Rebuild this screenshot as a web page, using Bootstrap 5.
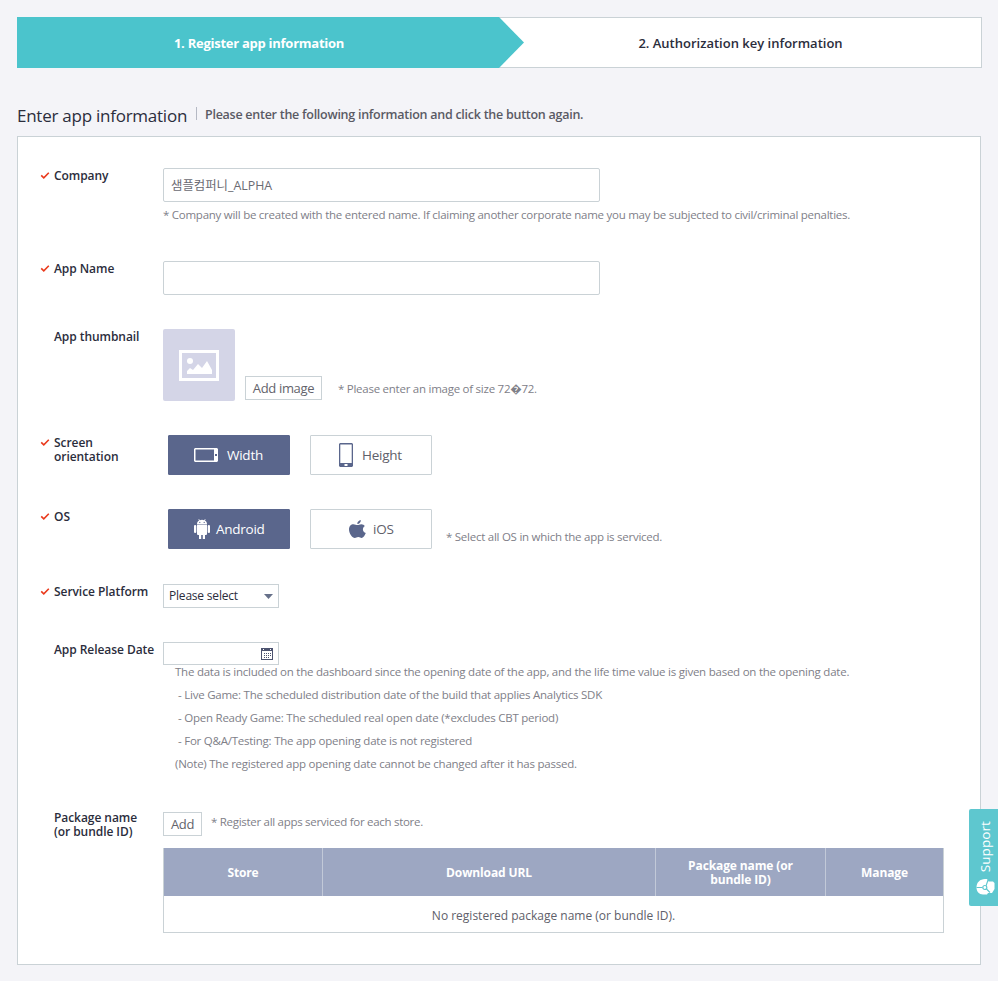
<!DOCTYPE html>
<html lang="en">
<head>
<meta charset="utf-8">
<meta name="viewport" content="width=device-width, initial-scale=1">
<title>Register app information</title>
<link href="https://cdn.jsdelivr.net/npm/bootstrap@5.3.0/dist/css/bootstrap.min.css" rel="stylesheet">
<style>
  :root { --teal:#4bc4cc; --slate:#5a668c; --line:#cad2d6; --ink:#2b2d3c; --note:#808088; }
  body { font-family:"Open Sans","Noto Sans CJK KR",sans-serif; font-size:12px; line-height:14px; color:var(--ink); background:#f4f4f8; padding:17px 16px 16px 17px; height:981px; overflow:hidden; }
  .steps { height:51px; font-size:13px; }
  .step-now { width:507px; padding-right:23px; background:var(--teal); clip-path:polygon(0 0,482px 0,507px 50%,482px 100%,0 100%); letter-spacing:-.26px; z-index:1; }
  .step-next { margin-left:-25px; border:1px solid var(--line); }
  .heading { height:68px; padding-top:38px; }
  .heading h1 { font-size:17px; line-height:20px; letter-spacing:-.25px; font-weight:500; width:179px; }
  .heading p { font-size:12.5px; line-height:16px; letter-spacing:-.26px; color:#5a5a64; border-left:1px solid #b5b9c4; padding-left:8px; height:13px; margin-top:1px; }
  .panel { width:964px; height:829px; border:1px solid var(--line); padding:31px 36px 0 22px; }
  .field-name { width:123px; padding:1px 0 0 14px; font-weight:600; letter-spacing:-.06px; }
  .field-name.required { padding-left:0; }
  .field-name.package { margin-top:-2px; }
  .tick { width:10px; height:9px; margin:2px 4px 0 0; flex:none; }
  .text-box { width:437px; height:34px; border-color:var(--line); border-radius:2px; padding:0 7px; font-size:12.4px; color:#6a6a72; }
  .note { font-size:11.5px; letter-spacing:-.255px; color:var(--note); white-space:nowrap; }
  .note-company { margin-top:6px; }
  .note-thumb { margin-top:53px; }
  .note-os { margin:21px 0 0 14px; }
  .note-add { margin-top:3px; letter-spacing:-.29px; }
  .small-btn { height:24px; border:1px solid var(--line); border-radius:0; padding:0; font-size:13px; line-height:22px; letter-spacing:-.35px; color:#63636b; background:#fff; }
  .add-image { width:77px; margin:47px 16px 0 10px; }
  .add-package { width:39px; margin-right:9px; }
  .thumb { width:72px; height:72px; background:#d4d5e7; border-radius:2px; }
  .choice { width:122px; height:40px; border:1px solid var(--line); border-radius:1px; padding:0; font-size:13.5px; line-height:20px; letter-spacing:-.25px; color:#60606a; background:#fff; display:flex; align-items:center; gap:9px; }
  .choice.picked { margin:0 20px 0 5px; padding-left:25px; background:var(--slate); border-color:var(--slate); color:#fff; }
  .choice.android { gap:6px; }
  .choice.tall { padding-left:28px; }
  .choice.ios { padding-left:38px; gap:7px; }
  .picker { width:116px; height:24px; border:1px solid var(--line); border-radius:0; padding:0 5px; letter-spacing:-.2px; }
  .picker.date { height:23px; }
  .r-company { height:93px } .r-name { height:68px } .r-thumb { height:106px } .r-screen { height:74px }
  .r-os { height:75px } .r-platform { height:58px } .r-date { height:170px }
  .explain { margin:-5px 0 0 12px; line-height:23px; letter-spacing:-.235px; }
  .explain .sub { padding-left:3px; }
  .pkg { width:781px; margin-top:12px; border:1px solid var(--line); border-top:0; border-collapse:separate; border-spacing:0; table-layout:fixed; }
  .pkg th { height:48px; padding:2px 28px 0; background:#9da7c2; color:#fff; font-size:12px; font-weight:700; text-align:center; letter-spacing:-.12px; }
  .pkg th + th { border-left:1px solid #c2c9d8; }
  .pkg td { height:36px; padding:4px 0 0; text-align:center; color:#60606a; }
  .support { position:fixed; right:0; top:809px; width:29px; height:97px; background:#5ec7cf; border-radius:2px 0 0 2px; color:#fff; }
  .support span { writing-mode:vertical-rl; transform:rotate(180deg); font-size:13.5px; font-weight:500; line-height:20px; letter-spacing:.1px; margin:12px 0 6px 2px; }
  .support svg { margin-left:4px; }
</style>
</head>
<body>
<svg class="d-none"><symbol id="tick" viewBox="0 0 10 9"><path d="M1.200 4.300 3.800 6.800 8.800 1.800" fill="none" stroke="#ea3a1c" stroke-width="1.600"/></symbol></svg>

<nav class="steps d-flex">
  <div class="step-now d-flex align-items-center justify-content-center text-white fw-bold position-relative">1. Register app information</div>
  <div class="step-next flex-grow-1 d-flex align-items-center justify-content-center bg-white fw-semibold">2. Authorization key information</div>
</nav>

<header class="heading d-flex">
  <h1 class="mb-0">Enter app information</h1>
  <p class="mb-0 fw-semibold">Please enter the following information and click the button again.</p>
</header>

<main class="panel bg-white">
  <div class="r-company d-flex">
    <div class="field-name required d-flex"><svg class="tick"><use href="#tick"/></svg>Company</div>
    <div><input class="form-control text-box shadow-none" value="샘플컴퍼니_ALPHA">
      <div class="note note-company">* Company will be created with the entered name. If claiming another corporate name you may be subjected to civil/criminal penalties.</div></div>
  </div>
  <div class="r-name d-flex">
    <div class="field-name required d-flex"><svg class="tick"><use href="#tick"/></svg>App Name</div>
    <div><input class="form-control text-box shadow-none"></div>
  </div>
  <div class="r-thumb d-flex">
    <div class="field-name">App thumbnail</div>
    <div class="thumb d-flex align-items-center justify-content-center">
      <svg width="42" height="32" viewBox="0 0 42 32"><path d="M2.500 2.500h37v28h-37z" fill="none" stroke="#fff" stroke-width="3"/><circle cx="12" cy="12" r="3" fill="#fff"/><path d="M9 25v-3l3-3 3 2 5-6 4 4 5-7 5 9v4z" fill="#fff"/></svg>
    </div>
    <button class="btn small-btn add-image">Add image</button>
    <div class="note note-thumb">* Please enter an image of size 72&#xFFFD;72.</div>
  </div>
  <div class="r-screen d-flex">
    <div class="field-name required d-flex"><svg class="tick"><use href="#tick"/></svg><span>Screen<br>orientation</span></div>
    <button class="btn choice picked">
      <svg width="24" height="14" viewBox="0 0 24 14"><path fill="#fff" fill-rule="evenodd" d="M1 0h22l1 1v12l-1 1H1l-1-1V1zM1.500 1.500v11h18.500v-11zM21 6v2h2V6z"/></svg>Width</button>
    <button class="btn choice tall">
      <svg width="14" height="24" viewBox="0 0 14 24"><path fill="#5a668c" fill-rule="evenodd" d="M1 0h12l1 1v22l-1 1H1l-1-1V1zM1.300 1.500V20h11.400V1.500zM5.500 21v2h3v-2z"/></svg>Height</button>
  </div>
  <div class="r-os d-flex">
    <div class="field-name required d-flex"><svg class="tick"><use href="#tick"/></svg>OS</div>
    <button class="btn choice picked android">
      <svg width="16" height="20" viewBox="0 0 16 20" fill="#fff"><path d="M3 5C3 3.300 4 2 5.100 1.500L4.400.3 5 0l.8 1.200a6 6 0 0 1 4.400 0L11 0l.6.3-.7 1.200C12 2 13 3.300 13 5z"/><path d="M3 5.600h10V15q0 1-1 1h-1v4H8.800v-4H7.200v4H5v-4H4q-1 0-1-1z"/><rect y="6" width="2.300" height="8" rx="1.100"/><rect x="13.700" y="6" width="2.300" height="8" rx="1.100"/><circle cx="5.800" cy="3.400" r=".6" fill="#5a668c"/><circle cx="10.200" cy="3.400" r=".6" fill="#5a668c"/></svg>Android</button>
    <button class="btn choice ios">
      <svg width="17" height="18" viewBox="0 0 17 18" fill="#5a668c"><path d="M11.800 0c.2 1.900-1.300 4-3.500 4C8.100 2.100 9.800.3 11.800 0zM8.700 5.100c.8 0 1.800-.9 3.600-.9 1.500 0 2.900.8 3.600 1.900-3 1.700-2.500 5.800.9 7-.8 2-2.300 4.800-4 4.800-1.400 0-1.800-.8-3.500-.8s-2.200.8-3.500.8C3.400 17.900 0 13.500 0 9.400c0-3.300 2.200-5.100 4.300-5.100 1.800 0 2.900.8 4.400.8z"/></svg>iOS</button>
    <div class="note note-os">* Select all OS in which the app is serviced.</div>
  </div>
  <div class="r-platform d-flex">
    <div class="field-name required d-flex"><svg class="tick"><use href="#tick"/></svg>Service Platform</div>
    <div class="picker d-flex align-items-center justify-content-between"><span>Please select</span><svg width="9" height="5"><path d="M0 0h9L4.500 5z" fill="#667089"/></svg></div>
  </div>
  <div class="r-date d-flex">
    <div class="field-name text-nowrap">App Release Date</div>
    <div>
      <div class="picker date d-flex align-items-center justify-content-end">
        <svg width="12" height="12" viewBox="0 0 12 12" shape-rendering="crispEdges"><path fill="#4c5370" fill-rule="evenodd" d="M0 0h12v12H0zM1 3v8h10V3zM2 1v1h1V1zM9 1v1h1V1z"/><path fill="#4c5370" d="M3 5h1v1H3zM5 5h1v1H5zM7 5h1v1H7zM3 7h1v1H3zM5 7h1v1H5zM7 7h1v1H7zM3 9h1v1H3zM5 9h1v1H5zM7 9h1v1H7zM9 5h1v1H9zM9 7h1v1H9z"/></svg>
      </div>
      <div class="note explain">
        <div>The data is included on the dashboard since the opening date of the app, and the life time value is given based on the opening date.</div>
        <div class="sub">- Live Game: The scheduled distribution date of the build that applies Analytics SDK</div>
        <div class="sub">- Open Ready Game: The scheduled real open date (*excludes CBT period)</div>
        <div class="sub">- For Q&amp;A/Testing: The app opening date is not registered</div>
        <div>(Note) The registered app opening date cannot be changed after it has passed.</div>
      </div>
    </div>
  </div>
  <div class="d-flex">
    <div class="field-name package">Package name<br>(or bundle ID)</div>
    <div>
      <div class="d-flex">
        <button class="btn small-btn add-package">Add</button>
        <div class="note note-add">* Register all apps serviced for each store.</div>
      </div>
      <table class="pkg">
        <colgroup><col style="width:158px"><col style="width:333px"><col style="width:170px"><col></colgroup>
        <thead><tr><th>Store</th><th>Download URL</th><th>Package name (or bundle ID)</th><th>Manage</th></tr></thead>
        <tbody><tr><td colspan="4">No registered package name (or bundle ID).</td></tr></tbody>
      </table>
    </div>
  </div>
</main>

<aside class="support d-flex flex-column align-items-center">
  <span>Support</span>
  <svg width="19" height="18" viewBox="0 0 19 18"><path fill="#fff" d="M9 1C4 1 .5 4.500.5 9.500c0 4 2.500 7 6.500 7h4l1-1.500h4l2.500-4V5L17 3.500h-4.500L11 1z"/><path d="M.5 9.500h6M10 8l2-6M10.500 11l3.500 3.500" fill="none" stroke="#5ec7cf" stroke-width="1.100"/><circle cx="8.800" cy="9.500" r="2" fill="#fff" stroke="#5ec7cf" stroke-width="1.200"/></svg>
</aside>
<script src="https://cdn.jsdelivr.net/npm/bootstrap@5.3.0/dist/js/bootstrap.bundle.min.js"></script>
</body>
</html>
